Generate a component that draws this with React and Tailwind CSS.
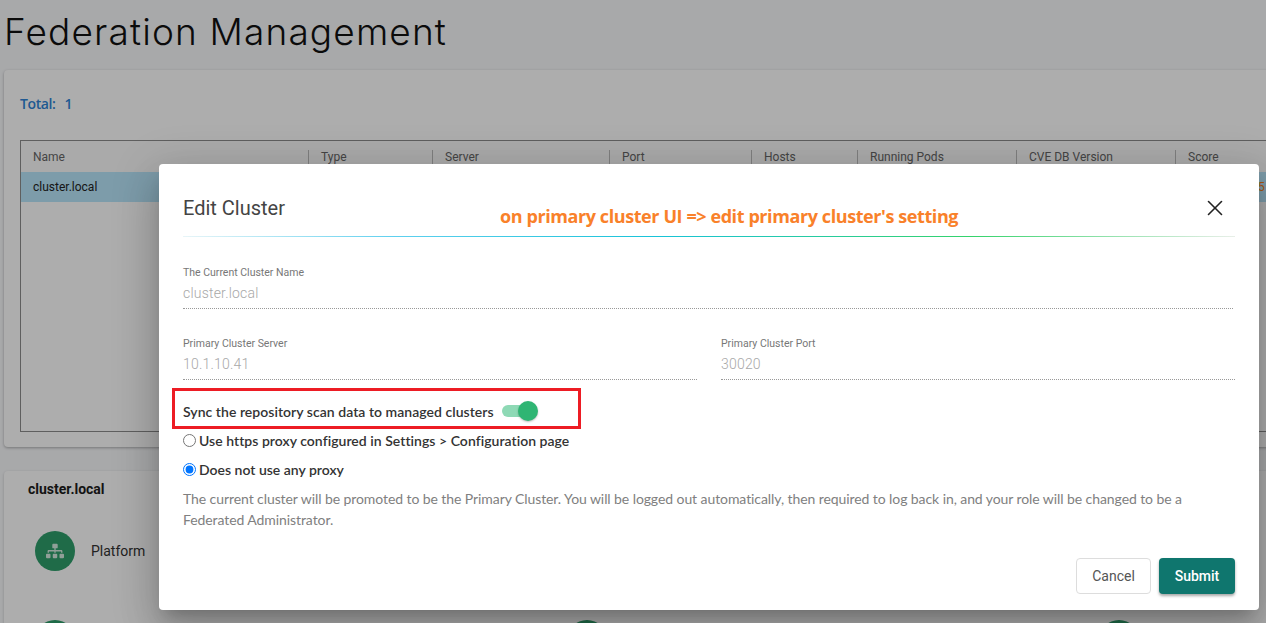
import React from "react";
import { FaSitemap } from "react-icons/fa";
import { X } from "lucide-react";

const cols = [
  ["Name", "w-[287px]"],
  ["Type", "w-[124px]"],
  ["Server", "w-[177px]"],
  ["Port", "w-[142px]"],
  ["Hosts", "w-[106px]"],
  ["Running Pods", "w-[159px]"],
  ["CVE DB Version", "w-[159px]"],
  ["Score", "w-[120px]"],
];

function Field({ label, value, className }) {
  return (
    <div className={className}>
      <div className="text-[10.5px] leading-[14px] text-[#777] font-['Roboto',sans-serif]">{label}</div>
      <div className="mt-[2px] h-[22px] text-[14px] leading-[22px] font-light text-[#a8a8a8] font-['Roboto',sans-serif] border-b border-dotted border-[#999] tracking-[0.2px] box-content pb-[4px]">
        {value}
      </div>
    </div>
  );
}

function Stat({ className }) {
  return (
    <div className={`w-10 h-10 rounded-full bg-[#2e9e6b] flex items-center justify-center text-[#d5ebe0] ${className || ""}`}>
      <FaSitemap size={18} />
    </div>
  );
}

export default function App() {
  return (
    <div className="relative w-[1266px] h-[623px] overflow-hidden bg-[#f8f9fb] font-['Roboto',sans-serif]">
      <h1 className="pl-[4px] h-[70px] pt-[8px] text-[37px] leading-[48px] font-light text-[#111] tracking-[1.15px] font-['Inter',sans-serif]">
        Federation Management
      </h1>
      <div className="ml-[4px] w-[1290px] h-[377px] bg-white rounded-[4px] shadow-[0_1px_3px_rgba(0,0,0,0.3)] pl-[16px]">
        <div className="pt-[25px] h-[70px] text-[14px] leading-[18px] font-semibold text-[#2f83d6] font-['Open_Sans',sans-serif] tracking-[-0.4px]">
          Total:<span className="ml-[9px]">1</span>
        </div>
        <div className="w-[1300px] h-[292px] border border-[#8d8d8d]">
          <div className="flex h-[31px] items-center bg-[#fbfbfb]">
            {cols.map(([c, w], i) => (
              <div key={c} className={`${w} shrink-0 h-[22px] mt-[9px] leading-[15px] text-[12px] text-[#666] ${i === 0 ? "pl-[12px]" : "pl-[12px] border-l border-[#bbb]"}`}>
                {c}
              </div>
            ))}
          </div>
          <div className="flex h-[30px] items-center bg-[#b9e6fb] text-[12px] text-[#222]">
            <div className="w-[1237px] pl-[12px] shrink-0">cluster.local</div>
            <div className="text-[#f58220]">5</div>
          </div>
        </div>
      </div>
      <div className="ml-[4px] mt-[24px] w-[1290px] h-[200px] bg-white rounded-[4px] shadow-[0_1px_3px_rgba(0,0,0,0.2)]">
        <div className="pl-[24px] pt-[9px] text-[14px] leading-[18px] font-bold text-[#1c1c1c]">cluster.local</div>
        <div className="flex items-center pl-[31px] mt-[33px]">
          <Stat />
          <div className="ml-[16px] text-[14px] text-[#333]">Platform</div>
        </div>
        <div className="flex pl-[31px] mt-[49px]">
          <Stat />
          <Stat className="ml-[492px]" />
          <Stat className="ml-[492px]" />
        </div>
      </div>

      <div className="absolute inset-0 bg-black/[0.32] pl-[159px] pt-[164px]">
        <div className="relative w-[1100px] h-[446px] bg-white rounded-[4px] px-[24px] shadow-[0_11px_15px_-7px_rgba(0,0,0,0.2),0_24px_38px_3px_rgba(0,0,0,0.14),0_9px_46px_8px_rgba(0,0,0,0.12)]">
          <div className="flex items-center justify-between h-[72px] pt-[16px]">
            <div className="text-[20px] leading-[28px] text-[#444]">Edit Cluster</div>
            <X size={26} strokeWidth={1.5} className="text-[#222] mr-[7px] mt-[-1px]" />
          </div>
          <div className="h-[1px] bg-[linear-gradient(90deg,#e8f5f8_0%,#5fd0ef_20%,#18c3d8_45%,#35d36b_75%,#e8efe8_100%)]" />
          <Field className="mt-[29px] w-[1050px]" label="The Current Cluster Name" value="cluster.local" />
          <div className="flex mt-[28px] gap-[24px]">
            <Field className="w-[514px]" label="Primary Cluster Server" value="10.1.10.41" />
            <Field className="w-[514px]" label="Primary Cluster Port" value="30020" />
          </div>
          <div className="font-['Lato',sans-serif] text-[14px] text-[#333] font-semibold">
            <div className="flex items-center h-[20px] mt-[21px]">
              <span className="tracking-[0.04px]">Sync the repository scan data to managed clusters</span>
              <div className="relative ml-[8px] w-[28px] h-[12px] rounded-full bg-[#8ed9b5]">
                <div className="absolute right-[-8px] top-[-4px] w-[20px] h-[20px] rounded-full bg-[#2fb573] shadow-[0_1px_2px_rgba(0,0,0,0.25)]" />
              </div>
            </div>
            <label className="flex items-center h-[20px] mt-[9px]">
              <input type="radio" name="proxy" className="m-0 w-[13px] h-[13px]" />
              <span className="ml-[3px] tracking-[0.035px]">Use https proxy configured in Settings &gt; Configuration page</span>
            </label>
            <label className="flex items-center h-[20px] mt-[9px]">
              <input type="radio" name="proxy" defaultChecked className="m-0 w-[13px] h-[13px]" />
              <span className="ml-[3px]">Does not use any proxy</span>
            </label>
          </div>
          <p className="mt-[9px] font-['Lato',sans-serif] text-[14px] leading-[21px] text-[#808080] tracking-[-0.08px]">
            The current cluster will be promoted to be the Primary Cluster. You will be logged out automatically, then required to log back in, and your role will be changed to be a Federated Administrator.
          </p>
          <div className="flex justify-end gap-[8px] mt-[28px]">
            <button className="w-[75px] h-[36px] rounded-[4px] border border-[#ddd] bg-white text-[14px] text-[#555]">Cancel</button>
            <button className="w-[76px] h-[36px] rounded-[4px] bg-[#0f766e] text-[14px] font-medium text-white shadow-[0_2px_3px_rgba(0,0,0,0.35)]">Submit</button>
          </div>
          <div className="absolute left-[341px] top-[40px] text-[18px] leading-[24px] font-bold text-[#f9812a] font-['Open_Sans',sans-serif] whitespace-nowrap tracking-[-0.41px]">
            on primary cluster UI =&gt; edit primary cluster's setting
          </div>
          <div className="absolute left-[13px] top-[224px] w-[409px] h-[41px] border-[3px] border-[#ed1c24]" />
        </div>
      </div>
    </div>
  );
}
